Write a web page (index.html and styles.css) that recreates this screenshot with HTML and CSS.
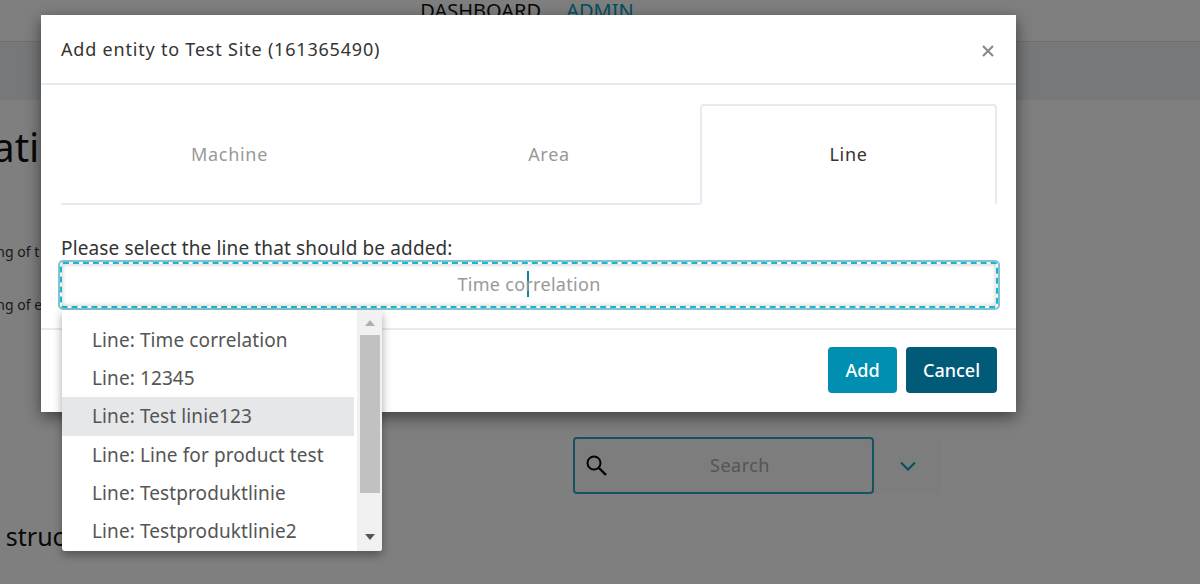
FILE: index.html
```html
<!DOCTYPE html>
<html lang="en">
<head>
    <meta charset="UTF-8">
    <meta name="viewport" content="width=device-width, initial-scale=1.0">
    <title>Add entity</title>
    <link rel="stylesheet" href="styles.css">
</head>
<body>
    <div class="page">
        <nav class="top-nav">
            <a class="nav-link">DASHBOARD</a>
            <a class="nav-link nav-active">ADMIN</a>
        </nav>
        <div class="sub-band"></div>
        <main class="content">
            <h1 class="page-title">Administration</h1>
            <p class="page-note">Listing of t</p>
            <p class="page-note">Listing of e</p>
            <div class="search-row">
                <div class="search-box">
                    <svg class="search-icon" viewBox="0 0 24 24" width="24" height="24">
                        <circle cx="10" cy="10" r="6.5" fill="none" stroke="#000" stroke-width="2"/>
                        <path d="M15 15l7 7" stroke="#000" stroke-width="2.4" fill="none"/>
                    </svg>
                    <span class="search-text">Search</span>
                </div>
                <div class="search-toggle">
                    <svg viewBox="0 0 16 10" width="16" height="10">
                        <path d="M1 1.5l7 7 7-7" stroke="#00a0c0" stroke-width="2" fill="none"/>
                    </svg>
                </div>
            </div>
            <h2 class="section-title">Site structure</h2>
        </main>
    </div>

    <div class="overlay"></div>

    <div class="modal">
        <header class="modal-header">
            <span class="modal-title">Add entity to Test Site (161365490)</span>
            <svg class="modal-close" viewBox="0 0 12 12" width="12" height="12">
                <path d="M1 1l10 10M11 1L1 11" stroke="#8a8a8a" stroke-width="2.2" fill="none"/>
            </svg>
        </header>
        <div class="modal-body">
            <div class="tabs">
                <div class="tab tab-machine">Machine</div>
                <div class="tab tab-area">Area</div>
                <div class="tab tab-line">Line</div>
            </div>
            <label class="field-label" for="line">Please select the line that should be added:</label>
            <div class="field-input" id="line">
                <span>Time co</span><span class="caret"></span><span>rrelation</span>
            </div>
        </div>
        <footer class="modal-footer">
            <button class="btn btn-add">Add</button>
            <button class="btn btn-cancel">Cancel</button>
        </footer>
    </div>

    <div class="dropdown">
        <ul class="dropdown-list">
            <li>Line: Time correlation</li>
            <li>Line: 12345</li>
            <li class="is-hover">Line: Test linie123</li>
            <li>Line: Line for product test</li>
            <li>Line: Testproduktlinie</li>
            <li>Line: Testproduktlinie2</li>
        </ul>
        <div class="scrollbar">
            <span class="arrow-up"></span>
            <span class="thumb"></span>
            <span class="arrow-down"></span>
        </div>
    </div>
</body>
</html>
```

FILE: styles.css
```css
body, html {
    height: 584px;
    margin: 0;
    overflow: hidden;
    font-family: "Noto Sans", Arial, sans-serif;
    color: #333;
}

.page {
    height: 584px;
    background: #fff;
    overflow: hidden;
}

.top-nav {
    height: 41px;
    border-bottom: 1px solid #dcdcdc;
    display: flex;
    justify-content: center;
    align-items: flex-end;
    gap: 25px;
    padding-right: 146px;
}

.nav-link {
    font-size: 20px;
    line-height: 24px;
    margin-bottom: 18px;
    color: #111;
}

.nav-active {
    color: #00a0c0;
}

.sub-band {
    height: 58px;
    background: #eef0f2;
}

.content {
    height: 484px;
}

.page-title {
    margin: 22px 0 0 -190px;
    font-size: 40px;
    line-height: 50px;
    font-weight: 400;
    color: #111;
}

.page-note {
    margin: 0 0 0 -30px;
    font-size: 14px;
    line-height: 20px;
    color: #333;
}

.page-title + .page-note {
    margin-top: 70px;
}

.page-note + .page-note {
    margin-top: 33px;
}

.search-row {
    display: flex;
    width: 369px;
    height: 57px;
    margin: 122px 0 0 573px;
    background: #fafafa;
}

.search-box {
    width: 301px;
    box-sizing: border-box;
    border: 2px solid #2aa5c4;
    border-radius: 4px;
    display: flex;
    align-items: center;
    padding: 0 0 2px 9px;
}

.search-icon {
    flex: none;
}

.search-text {
    flex: 1;
    text-align: center;
    font-size: 18px;
    letter-spacing: 0.5px;
    color: #aaa;
}

.search-toggle {
    flex: 1;
    display: flex;
    align-items: center;
    justify-content: center;
}

.section-title {
    margin: 25px 0 0 -44px;
    font-size: 25px;
    line-height: 34px;
    font-weight: 400;
    color: #111;
}

.overlay {
    position: absolute;
    inset: 0;
    background: rgba(0, 0, 0, 0.5);
}

.modal {
    position: absolute;
    left: 41px;
    top: 15px;
    width: 975px;
    height: 397px;
    background: #fff;
    box-shadow: 0 5px 15px rgba(0, 0, 0, 0.5);
    display: flex;
    flex-direction: column;
}

.modal-header {
    height: 68px;
    border-bottom: 2px solid #e6ebf1;
    display: flex;
    align-items: center;
    justify-content: space-between;
    padding: 0 22px 0 20px;
}

.modal-title {
    font-size: 18px;
    letter-spacing: 0.8px;
    color: #333;
}

.modal-close {
    margin-top: 3px;
}

.modal-body {
    flex: 1;
    padding: 19px 19px 0 20px;
    border-bottom: 2px solid #e6ebf1;
}

.tabs {
    display: grid;
    grid-template-columns: 337px 302px 297px;
    height: 101px;
}

.tab {
    display: flex;
    align-items: center;
    justify-content: center;
    font-size: 18px;
    letter-spacing: 0.7px;
    color: #999;
    box-sizing: border-box;
    border-bottom: 2px solid #e6ebf1;
}

.tab-line {
    color: #333;
    border: 2px solid #e6ebf1;
    border-bottom-color: transparent;
    border-radius: 4px 4px 0 0;
    padding-bottom: 2px;
}

.field-label {
    display: block;
    margin-top: 32px;
    font-size: 19px;
    letter-spacing: 0.13px;
    line-height: 22px;
    color: #333;
}

.field-input {
    margin: 3px -1px 0 -1px;
    height: 46px;
    box-sizing: border-box;
    padding-bottom: 2px;
    border: 2px dashed #16b8d0;
    outline: 2px solid #83c3cf;
    border-radius: 3px;
    box-shadow: inset 0 0 4px rgba(0, 0, 0, 0.25);
    display: flex;
    align-items: center;
    justify-content: center;
    font-size: 18px;
    letter-spacing: 0.3px;
    color: #999;
    white-space: pre;
}

.caret {
    width: 2px;
    height: 26px;
    margin: 0 -4px 0 2px;
    background: #0a87a3;
}

.modal-footer {
    height: 82px;
    flex: none;
    box-sizing: border-box;
    display: flex;
    justify-content: flex-end;
    gap: 9px;
    padding: 17px 19px 0 0;
}

.btn {
    height: 46px;
    border: none;
    border-radius: 4px;
    color: #fff;
    font-family: inherit;
    font-size: 18px;
    font-weight: 500;
}

.btn-add {
    width: 69px;
    background: #008fb0;
}

.btn-cancel {
    width: 91px;
    background: #005a78;
}

.dropdown {
    position: absolute;
    left: 62px;
    top: 310px;
    width: 320px;
    height: 241px;
    background: #fff;
    box-shadow: 0 4px 10px rgba(0, 0, 0, 0.35);
    border-radius: 0 0 3px 3px;
    display: flex;
    overflow: hidden;
}

.dropdown-list {
    list-style: none;
    margin: 11px 3px 0 0;
    padding: 0;
    width: 292px;
    flex: none;
}

.dropdown-list li {
    height: 38.2px;
    line-height: 38px;
    padding-left: 30px;
    font-size: 19px;
    letter-spacing: 0.1px;
    color: #555;
}

.dropdown-list .is-hover {
    background: #e6e7e9;
}

.scrollbar {
    width: 25px;
    background: #f1f1f1;
    display: flex;
    flex-direction: column;
    align-items: center;
}

.arrow-up {
    margin-top: 10px;
    border: 5px solid transparent;
    border-top: none;
    border-bottom: 6px solid #b0b0b0;
}

.thumb {
    width: 20px;
    height: 158px;
    margin-top: 9px;
    background: #c1c1c1;
}

.arrow-down {
    margin-top: 41px;
    border: 5px solid transparent;
    border-bottom: none;
    border-top: 6px solid #555;
}
```
